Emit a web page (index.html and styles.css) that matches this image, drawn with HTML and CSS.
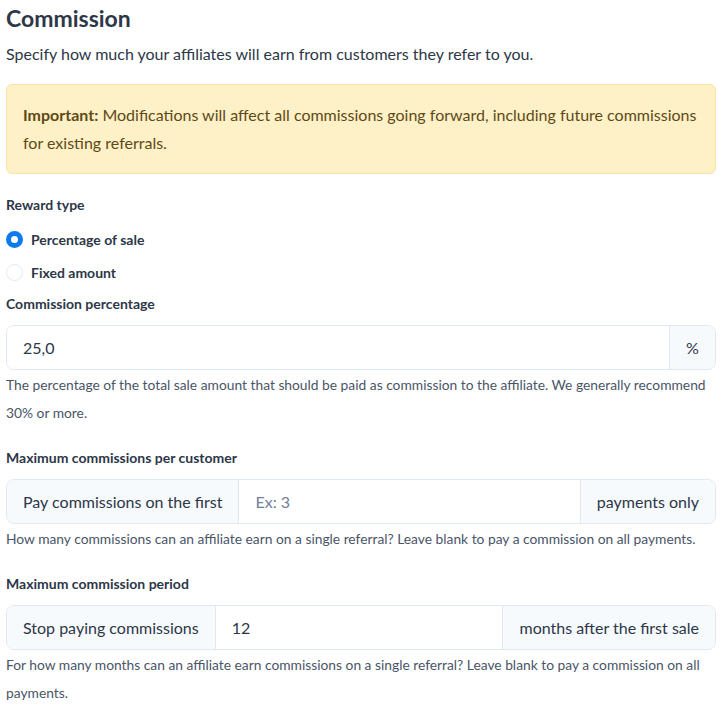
FILE: index.html
```html
<!DOCTYPE html>
<html lang="en">
<head>
  <meta charset="UTF-8" />
  <title>Commission</title>
  <link rel="stylesheet" href="styles.css">
</head>
<body>

  <h2 class="title">Commission</h2>
  <p class="subtitle">Specify how much your affiliates will earn from customers they refer to you.</p>

  <div class="alert">
    <strong>Important:</strong> Modifications will affect all commissions going forward, including future commissions for existing referrals.
  </div>

  <!-- reward type -->
  <div class="field">
    <label class="label">Reward type</label>
    <div class="radio-row">
      <span class="radio checked"></span>
      <span class="radio-label">Percentage of sale</span>
    </div>
    <div class="radio-row">
      <span class="radio"></span>
      <span class="radio-label">Fixed amount</span>
    </div>
  </div>

  <div class="field field-tight">
    <label class="label">Commission percentage</label>
    <div class="input-group">
      <div class="input">25,0</div>
      <div class="addon addon-small">%</div>
    </div>
    <p class="help">The percentage of the total sale amount that should be paid as commission to the affiliate. We generally recommend 30% or more.</p>
  </div>

  <div class="field">
    <label class="label">Maximum commissions per customer</label>
    <div class="input-group">
      <div class="addon addon-left">Pay commissions on the first</div>
      <div class="input placeholder">Ex: 3</div>
      <div class="addon">payments only</div>
    </div>
    <p class="help">How many commissions can an affiliate earn on a single referral? Leave blank to pay a commission on all payments.</p>
  </div>

  <div class="field">
    <label class="label">Maximum commission period</label>
    <div class="input-group">
      <div class="addon addon-left">Stop paying commissions</div>
      <div class="input">12</div>
      <div class="addon">months after the first sale</div>
    </div>
    <p class="help">For how many months can an affiliate earn commissions on a single referral? Leave blank to pay a commission on all payments.</p>
  </div>

</body>
</html>
```

FILE: styles.css
```css
body {
  font-family: Lato, "Open Sans", sans-serif;
  margin: 0;
  padding: 0 6px 0 6px;
  width: 710px;
  color: #2d3748;
  background: #fff;
}
.title {
  font-size: 23px;
  font-weight: 700;
  margin: 4px 0 0 0;
  line-height: 28px;
  color: #2d3748;
}
.subtitle {
  font-size: 16px;
  margin: 11px 0 0 0;
  line-height: 22px;
}
.alert {
  margin-top: 19px;
  background: #fef0c7;
  border: 1px solid #fbe3a3;
  border-radius: 6px;
  padding: 16px;
  font-size: 16px;
  line-height: 28px;
  color: #5f4a16;
}
.alert strong {
  font-weight: 700;
}
.field {
  margin-top: 21px;
}
.field-tight {
  margin-top: 12px;
}
.label {
  display: block;
  font-size: 14px;
  font-weight: 700;
  line-height: 20px;
  color: #2d3748;
}
.radio-row {
  display: flex;
  align-items: center;
  gap: 8px;
  margin-top: 14px;
  height: 20px;
  font-size: 14px;
  font-weight: 700;
}
.radio-row + .radio-row {
  margin-top: 13px;
}
.radio {
  width: 17px;
  height: 17px;
  border-radius: 50%;
  border: 1px solid #e2e8f0;
  box-sizing: border-box;
  background: #fff;
}
.radio.checked {
  border: 5px solid #0b7bed;
}
.input-group {
  margin-top: 11px;
  display: flex;
  height: 45px;
  border: 1px solid #e2e8f0;
  border-radius: 8px;
  box-sizing: border-box;
  overflow: hidden;
  font-size: 16px;
}
.input {
  flex: 1;
  display: flex;
  align-items: center;
  padding: 0 16px;
  background: #fff;
  color: #2d3748;
}
.placeholder {
  color: #718096;
}
.addon {
  display: flex;
  align-items: center;
  padding: 0 16px;
  background: #f7fafc;
  border-left: 1px solid #e2e8f0;
  color: #2d3748;
  white-space: nowrap;
}
.addon-left {
  border-left: none;
  border-right: 1px solid #e2e8f0;
}
.addon-small {
  width: 46px;
  box-sizing: border-box;
  justify-content: center;
  padding: 0;
}
.help {
  margin: 1px 0 0 0;
  font-size: 13.8px;
  line-height: 28px;
  color: #4a5568;
}
```
